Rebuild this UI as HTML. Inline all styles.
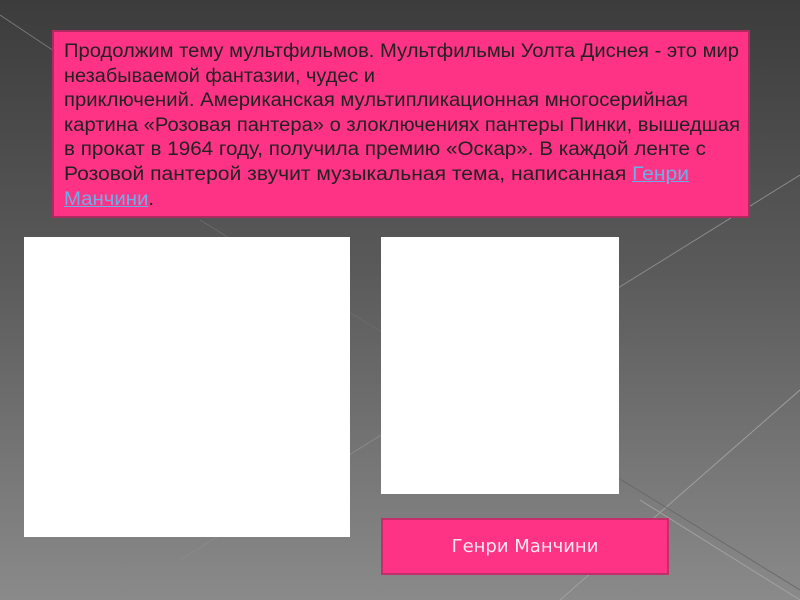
<!DOCTYPE html>
<html><head><meta charset="utf-8"><style>
html,body{margin:0;padding:0}
body{width:800px;height:600px;position:relative;overflow:hidden;background:linear-gradient(180deg,#3c3c3c 0%,#5a5a5a 45%,#8a8a8a 100%);font-family:"Liberation Sans","DejaVu Sans",sans-serif}
.box{position:absolute;left:52px;top:30px;width:694px;height:184px;background:#ff3385;border:2px solid #b02a62}
.t{position:absolute;left:10px;top:8px;font-size:19px;line-height:24.6px;color:#222}
.t div{white-space:nowrap;transform-origin:left center;width:max-content}
a{color:#6ab0e8;text-decoration:underline}
.w{position:absolute;background:#fff}
.btn{position:absolute;left:381px;top:518px;width:284px;height:53px;background:#ff3385;border:2px solid #c2306c;color:#ffe6f0;font-size:18px;text-align:center;line-height:53px;font-family:"DejaVu Sans","Liberation Sans",sans-serif}
</style></head><body>
<svg width="800" height="600" style="position:absolute;left:0;top:0">
<line x1="0" y1="15" x2="60" y2="55" stroke="#777" stroke-width="1"/>
<line x1="180" y1="560" x2="800" y2="175" stroke="#8a8a8a" stroke-width="1"/>
<line x1="560" y1="600" x2="800" y2="390" stroke="#a0a0a0" stroke-width="1"/>
<line x1="640" y1="500" x2="800" y2="600" stroke="#a0a0a0" stroke-width="1"/>
<line x1="200" y1="220" x2="800" y2="590" stroke="#6a6a6a" stroke-width="1"/>
</svg>
<div class="box"><div class="t" id="t">
<div>Продолжим тему мультфильмов. Мультфильмы Уолта Диснея - это мир</div>
<div>незабываемой фантазии, чудес и</div>
<div>приключений. Американская мультипликационная многосерийная</div>
<div>картина «Розовая пантера» о злоключениях пантеры Пинки, вышедшая</div>
<div>в прокат в 1964 году, получила премию «Оскар». В каждой ленте с</div>
<div>Розовой пантерой звучит музыкальная тема, написанная <a>Генри</a></div>
<div><a>Манчини</a>.</div>
</div></div>
<div class="w" style="left:24px;top:237px;width:326px;height:300px"></div>
<div class="w" style="left:381px;top:237px;width:238px;height:257px"></div>
<div class="btn">Генри Манчини</div>
<script>
var tw=[675,311,624,676,642,625,90];
var ds=document.getElementById('t').children;
for(var i=0;i<ds.length;i++){var w=ds[i].getBoundingClientRect().width;if(w>0)ds[i].style.transform='scaleX('+(tw[i]/w)+')';}
</script>
</body></html>
